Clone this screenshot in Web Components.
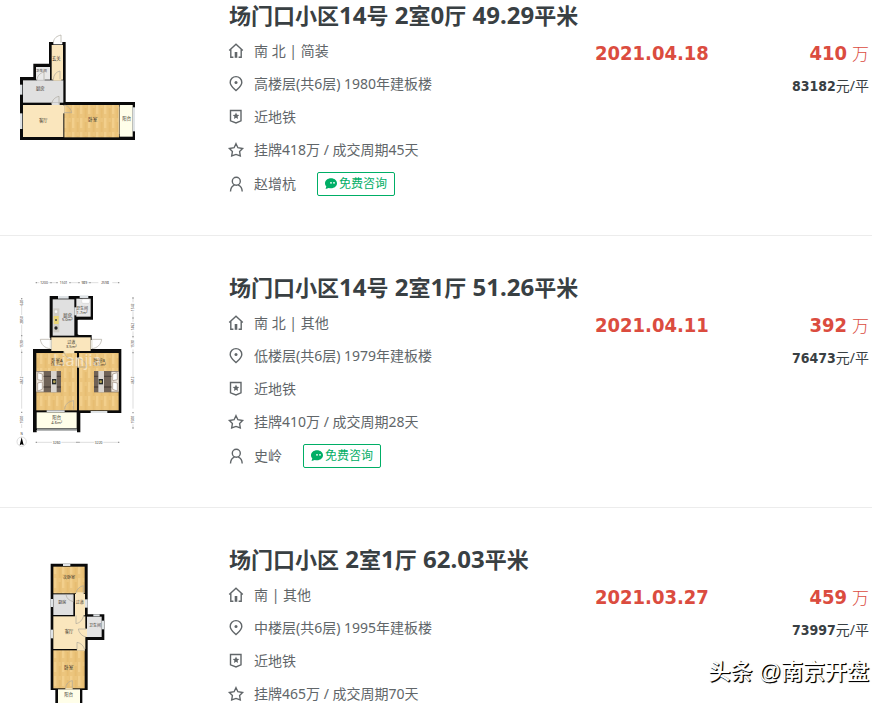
<!DOCTYPE html>
<html lang="zh-CN">
<head>
<meta charset="utf-8">
<title>成交记录</title>
<style>
body{margin:0;background:#fff;font-family:"Noto Sans","Noto Sans CJK SC",sans-serif;color:#616669}
</style>
</head>
<body>
<deal-list>
  <deal-item date="2021.04.18" total="410" unit="83182">
    <floor-plan slot="plan" kind="corner"></floor-plan>
    <deal-title slot="title">场门口小区14号 2室0厅 49.29平米</deal-title>
    <info-line icon="house">南 北 | 简装</info-line>
    <info-line icon="pin">高楼层(共6层) 1980年建板楼</info-line>
    <info-line icon="badge">近地铁</info-line>
    <info-line icon="star">挂牌418万 / 成交周期45天</info-line>
    <info-line icon="person">赵增杭<consult-button slot="action">免费咨询</consult-button></info-line>
  </deal-item>
  <deal-item date="2021.04.11" total="392" unit="76473">
    <floor-plan slot="plan" kind="twin"></floor-plan>
    <deal-title slot="title">场门口小区14号 2室1厅 51.26平米</deal-title>
    <info-line icon="house">南 北 | 其他</info-line>
    <info-line icon="pin">低楼层(共6层) 1979年建板楼</info-line>
    <info-line icon="badge">近地铁</info-line>
    <info-line icon="star">挂牌410万 / 成交周期28天</info-line>
    <info-line icon="person">史岭<consult-button slot="action">免费咨询</consult-button></info-line>
  </deal-item>
  <deal-item date="2021.03.27" total="459" unit="73997">
    <floor-plan slot="plan" kind="tower"></floor-plan>
    <deal-title slot="title">场门口小区 2室1厅 62.03平米</deal-title>
    <info-line icon="house">南 | 其他</info-line>
    <info-line icon="pin">中楼层(共6层) 1995年建板楼</info-line>
    <info-line icon="badge">近地铁</info-line>
    <info-line icon="star">挂牌465万 / 成交周期70天</info-line>
  </deal-item>
  <source-mark slot="mark">头条 @南京开盘</source-mark>
</deal-list>
<script>
const define = (name, render) => customElements.define(name, class extends HTMLElement {
  connectedCallback() {
    if (!this.shadowRoot) this.attachShadow({ mode: "open" }).innerHTML = render(this);
  }
});

const icons = {
  house: '<path d="M1.2 7.6 8 1.2l6.8 6.4M2.8 6.5v7.8h2.6M13.2 6.5v7.8h-2.6"/><path d="M8 9v5.8" stroke-width="2.6"/>',
  pin: '<path d="M8 14.6C5.4 12 2.2 9.7 2.2 6.4a5.8 5.8 0 0 1 11.6 0C13.8 9.7 10.6 12 8 14.6Z"/><circle cx="8" cy="6.5" r="1.5" fill="currentColor" stroke="none"/>',
  badge: '<path d="M2.500 1.500h10.500v10.300L8 14 2.500 11.800Z"/><path d="m8 3.600 1 2.100 2.300.3-1.700 1.600.4 2.300L8 8.800 6 9.900l.4-2.300L4.700 6l2.300-.3Z" fill="currentColor" stroke="none"/>',
  star: '<path d="M8 1.7 9.9 5.7 14.6 6.5 11.6 9.5 12.3 14 8 12.4 3.7 14 4.4 9.5 1.4 6.5 6.1 5.7Z"/>',
  person: '<circle cx="8.3" cy="5.3" r="4"/><path d="M2.5 15.5c.1-3.6 1.8-5.6 4-6.4M14.2 15.5c-.1-3.6-1.8-5.6-4-6.4"/>'
};

define("line-icon", el => `
  <style>:host{display:block;flex:none;width:16px;height:16px}svg{display:block;width:16px;height:16px;overflow:visible}</style>
  <svg viewBox="0 0 16 16" fill="none" stroke="currentColor" stroke-width="1.4" aria-hidden="true">${icons[el.getAttribute("name")]}</svg>`);

define("info-line", el => `
  <style>
    :host{display:flex;align-items:center;height:33px;gap:10px;font-size:14px;line-height:20px;white-space:nowrap}
    :host([icon="person"]){height:35px}
    .action{display:block;margin-left:11px}
  </style>
  <line-icon name="${el.getAttribute("icon")}"></line-icon>
  <span><slot></slot></span><slot class="action" name="action"></slot>`);

define("consult-button", () => `
  <style>
    :host{display:block}
    button{display:flex;align-items:center;justify-content:center;gap:1px;box-sizing:border-box;height:24px;padding:0 7px 0 6px;
      border:1px solid #00ae66;border-radius:2px;background:#fff;color:#00ae66;font:inherit;font-size:12px;line-height:18px;cursor:pointer}
    svg{display:block;width:14px;height:14px}
  </style>
  <button type="button"><svg viewBox="0 0 14 14" aria-hidden="true"><path fill="#00ae66" d="M7 1.2c3.4 0 6 2.2 6 5s-2.6 5-6 5c-.8 0-1.5-.1-2.2-.3L1.6 12l.7-2.7C1.5 8.5 1 7.4 1 6.2c0-2.8 2.6-5 6-5Z"/><circle cx="7" cy="5.8" r=".9" fill="#fff"/><circle cx="10" cy="5.8" r=".9" fill="#fff"/></svg><slot></slot></button>`);

define("deal-title", el => `
  <style>
    :host{display:block}
    h2{margin:0 0 4px;padding-left:1px;font-size:24px;line-height:30px;font-weight:700;color:#394043;white-space:nowrap}
    a{color:inherit;text-decoration:none}
    .han{font-size:22px}
  </style>
  <h2><a href="#">${el.textContent.trim().replace(/[\u4e00-\u9fff]+/g, '<span class="han">$&</span>')}</a></h2>`);

define("deal-item", el => `
  <style>
    :host{display:grid;grid-template-columns:228px minmax(0,1fr) 151px 123px;padding:36px 3px 34px 0;border-bottom:1px solid #ececec}
    :host(:first-of-type){padding-top:0}
    .date,.total{font:700 20px/28px "DejaVu Sans Condensed","DejaVu Sans","Noto Sans CJK SC",sans-serif;color:#db4c3f}
    .date,.price{padding-top:39px}
    .price{text-align:right;white-space:nowrap}
    .total small{font-size:17px;font-weight:300}
    .unit{margin-top:6px;font:700 14px/24px "DejaVu Sans Condensed","DejaVu Sans","Noto Sans CJK SC",sans-serif;color:#394043}
    .unit small{font:400 14px "Noto Sans","Noto Sans CJK SC",sans-serif}
  </style>
  <slot name="plan"></slot>
  <div><slot name="title"></slot><slot></slot></div>
  <div class="date">${el.getAttribute("date")}</div>
  <div class="price">
    <div class="total">${el.getAttribute("total")}<small> 万</small></div>
    <div class="unit">${el.getAttribute("unit")}<small>元/平</small></div>
  </div>`);

define("source-mark", () => `
  <style>:host{position:absolute;right:20px;bottom:15px;font:500 22px/32px "Liberation Sans","Noto Sans CJK SC",sans-serif;color:#fff;
    text-shadow:1px 1px 0 #000,1px 1px 1px #000;white-space:nowrap}</style><slot></slot>`);

define("deal-list", () => `
  <style>:host{display:block;position:relative;height:100vh;overflow:hidden}main{padding-right:17px}</style>
  <main><slot></slot></main><slot name="mark"></slot>`);

const t = (x, y, s, size = 13) => `<text x="${x}" y="${y}" font-size="${size}">${s}</text>`;
const r = (x, y, w, h, fill) => `<rect x="${x}" y="${y}" width="${w}" height="${h}" fill="${fill}"/>`;
const W = "url(#wood)", C = "#fae6bd", G = "#e0e0e0", I = "#fffee9", K = "#0a0a0a", N = "#dfe3e6";
const door = d => `<path d="${d}" fill="none" stroke="#aaa69c" stroke-width="2"/>`;
const bed = (x, flip) => `<g transform="translate(${x} 303)${flip ? " scale(-1 1)" : ""}">
  ${r(0, 0, 74, 64, "#6f6257")}${r(0, 2, 22, 60, "#ece4da")}
  <path d="M4 5l14 4v20L4 26ZM4 36l14-3v22L4 60Z" fill="#fff" stroke="#9a8878" stroke-width="2"/>
  <path d="M22 16h52M22 48h52" stroke="#4d433d" stroke-width="4"/>${r(44, 0, 17, 64, "#d9d4ce")}${r(47, 24, 13, 16, "#252a2a")}<circle cx="54" cy="32" r="4" fill="#b5a456"/></g>`;

const plans = {
  corner: `<g transform="translate(0 60)">
    <path d="M147 66h50v180h208v114H60V171h40v-40h47Z" fill="${K}"/>
    ${r(155, 75, 34, 104, C)}${r(108, 141, 42, 38, "#e8e8e8")}${r(69, 181, 121, 67, G)}
    ${r(69, 255, 121, 96, C)}${r(193, 255, 164, 97, W)}${r(359, 255, 39, 95, I)}
    ${r(160, 64, 27, 9, "#fff")}${r(60, 194, 7, 30, N)}${r(60, 280, 7, 47, N)}${r(398, 262, 7, 72, N)}
    ${r(189, 256, 5, 24, C)}${r(355, 260, 3, 82, "#e6cfa0")}${r(111, 177, 23, 5, G)}${r(155, 247, 24, 8, G)}${r(160, 176, 24, 6, C)}
    ${door("M160 68c1-14 11-20 23-23v23M160 178c1-14 8-22 20-25v25M111 180c1-14 10-21 21-24v24M155 252c2-14 12-21 22-23v24M192 278h23c-2-11-9-20-21-23")}
    ${t(169, 120, "玄关")}${t(124, 157, "卫生间", 11)}${t(121, 211, "厨房")}${t(130, 305, "客厅")}${t(278, 302, "卧室", 14)}${t(380, 299, "阳台")}
  </g>`,
  twin: `<g transform="translate(0 -6)">
    <path d="M149 78h130v71h-44v46h40v42h89v192H241v58h-10v-7H110v7H99V237h52v-34h-2Z" fill="${K}"/>
    ${r(158, 88, 65, 109, G)}${r(229, 86, 43, 54, "#e8e8e8")}${r(233, 150, 46, 43, "#fff")}
    ${r(154, 202, 118, 41, C)}${r(109, 249, 122, 172, W)}${r(237, 249, 119, 172, W)}${r(110, 427, 120, 48, I)}
    ${r(174, 78, 32, 8, N)}${r(239, 76, 26, 8, N)}${r(272, 423, 50, 6, N)}${r(111, 476, 120, 6, "#929696")}${r(191, 242, 32, 8, C)}${r(140, 421, 54, 5, N)}
    ${r(223, 112, 7, 24, N)}${r(149, 210, 6, 27, "#e9e7df")}${r(272, 210, 6, 27, "#e9e7df")}${r(232, 263, 5, 30, C)}
    ${r(160, 115, 18, 72, "#cfccc6")}${r(161, 138, 15, 24, "#ead575")}<circle cx="168" cy="150" r="3" fill="#444"/><circle cx="168" cy="174" r="5" fill="#222"/><circle cx="168" cy="125" r="4" fill="#f6f6f6"/>
    <rect x="245" y="87" width="24" height="13" rx="4" fill="#fff" stroke="#bbb"/>
    ${door("M150 208h-29c2 16 13 26 29 28M276 208h29c-2 16-13 26-29 28M192 244c2 13 11 22 30 26M194 418c1-16 12-24 27-26v27M234 265c13 2 22 10 27 26h-27M228 112h12")}
    ${bed(109, false)}${bed(356, true)}
    ${t(203, 140, "厨房")}${t(202, 154, "5.0m²", 12)}${t(246, 119, "卫生间", 12)}${t(246, 133, "1.7m²", 12)}${t(214, 221, "过道", 12)}${t(214, 235, "3.5m²", 12)}
    ${t(171, 275, "卧室A")}${t(171, 289, "15.2m²", 12)}${t(298, 275, "卧室B")}${t(298, 289, "14.6m²", 12)}${t(170, 447, "阳台")}${t(170, 461, "4.6m²", 12)}
    <text class="brand" x="232" y="289" font-size="48">Lianjia</text>
    <g stroke="#9a9a9a" stroke-width="1" fill="none"><path d="M108 38h10M145 38h24M212 38h24M263 38h32M337 38h20M108 517h48M184 517h52M240 517h43M310 517h47M65 84v5M65 107v28M65 164v48M65 238v81M65 344v72M65 434v2M65 462v12M399 82v15M399 124v32M399 184v21M399 238v82M399 344v72M399 462v12"/>
    <path stroke-width="4" d="M109 36v4M153 36v4M171 36v4M210 36v4M237 36v4M270 36v4M356 36v4M109 515v4M231 515v4M237 515v4M356 515v4M63 86h4M63 197h4M63 247h4M63 427h4M397 84h4M397 144h4M397 200h4M397 248h4M397 428h4M397 474h4"/></g>
    ${t(132, 42, "1200", 10)}${t(191, 42, "1501", 10)}${t(253, 42, "989", 10)}${t(315, 42, "2598", 10)}${t(170, 521, "3260", 10)}${t(296, 521, "3220", 10)}
    ${[[65,98,"620"],[65,150,"2850"],[65,222,"1530"],[65,331,"4612"],[65,449,"1500"],[399,112,"1542"],[399,170,"1462"],[399,222,"1530"],[399,331,"4612"],[399,449,"1500"]].map(a => `<text transform="translate(${a[0] + 4} ${a[1]}) rotate(-90)" font-size="10">${a[2]}</text>`).join("")}
    <circle cx="65" cy="515" r="14" fill="none" stroke="#ccc" stroke-width="2"/><path d="m65 502 6 24-6-3-6 3Z" fill="#000"/>${t(65, 496, "N", 9)}
  </g>`,
  tower: `<g transform="translate(90 18)">
    <path d="M62 41h111v152h50v77h-50v150H157v60H76v-60H62Z" fill="${K}"/>
    ${r(70, 50, 94, 80, W)}${r(70, 133, 60, 62, G)}${r(135, 132, 30, 64, C)}${r(70, 199, 96, 98, C)}${r(171, 200, 44, 61, "#e3e3e3")}
    ${r(70, 301, 94, 114, W)}${r(84, 418, 66, 62, I)}
    ${r(99, 41, 22, 7, N)}${r(62, 147, 7, 24, N)}${r(62, 239, 7, 26, N)}${r(165, 148, 8, 25, N)}${r(215, 212, 7, 26, N)}${r(190, 193, 19, 6, N)}
    ${r(135, 194, 26, 7, C)}${r(141, 295, 24, 7, C)}${r(138, 127, 23, 6, C)}${r(164, 236, 7, 25, C)}${r(106, 414, 22, 5, "#f2dfb4")}
    ${door("M138 129c2-12 12-20 22-22v23M108 134c2 12 10 18 22 21v-21M138 196v25c12-2 20-12 23-25M168 237h-23c2 12 10 21 23 24M141 299v-22c12 2 20 10 23 22M107 415c1-14 9-21 20-23v23")}
    ${t(117, 88, "次卧室", 12)}${t(97, 162, "厨房", 12)}${t(149, 161, "过道", 12)}${t(117, 248, "客厅")}${t(195, 231, "卫生间", 12)}${t(116, 356, "卧室", 14)}${t(116, 438, "阳台")}
  </g>`
};

define("floor-plan", el => `
  <style>
    :host{display:block;height:190px;overflow:hidden}
    svg{display:block;width:160px;height:190px}
    text{text-anchor:middle;fill:#39342c;font-family:"Noto Sans","Noto Sans CJK SC",sans-serif}
    .brand{fill:#fff;opacity:.5}
  </style>
  <svg viewBox="0 0 480 570" role="img" aria-label="户型图">
    <defs><pattern id="wood" width="24" height="42" patternUnits="userSpaceOnUse">
      <rect width="24" height="42" fill="#ecc57d"/><rect width="7" height="30" fill="#f2cf8c"/><rect x="14" y="12" width="6" height="30" fill="#e7bd71"/><path d="M12 0v42M23 0v42" stroke="#e4b970" stroke-width="1"/>
    </pattern></defs>${plans[el.getAttribute("kind")]}
  </svg>`);
</script>
</body>
</html>
